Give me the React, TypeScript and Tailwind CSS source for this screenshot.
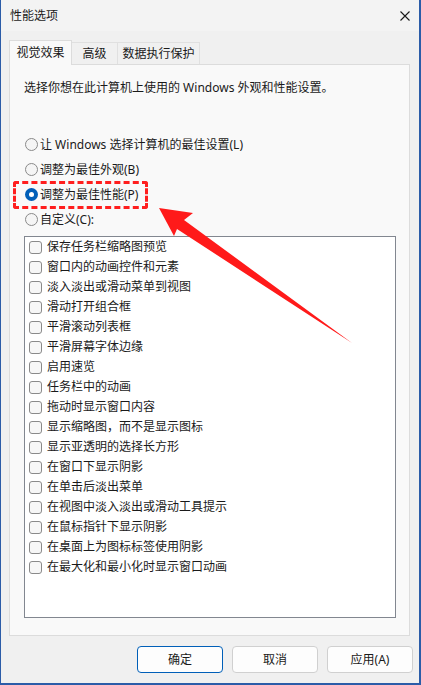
import React from 'react'

const effects = [
  '保存任务栏缩略图预览',
  '窗口内的动画控件和元素',
  '淡入淡出或滑动菜单到视图',
  '滑动打开组合框',
  '平滑滚动列表框',
  '平滑屏幕字体边缘',
  '启用速览',
  '任务栏中的动画',
  '拖动时显示窗口内容',
  '显示缩略图，而不是显示图标',
  '显示亚透明的选择长方形',
  '在窗口下显示阴影',
  '在单击后淡出菜单',
  '在视图中淡入淡出或滑动工具提示',
  '在鼠标指针下显示阴影',
  '在桌面上为图标标签使用阴影',
  '在最大化和最小化时显示窗口动画',
]

const options = [
  { label: '让 Windows 选择计算机的最佳设置(L)', checked: false },
  { label: '调整为最佳外观(B)', checked: false },
  { label: '调整为最佳性能(P)', checked: true },
  { label: '自定义(C):', checked: false },
]

const Radio: React.FC<{ checked: boolean }> = ({ checked }) =>
  checked ? (
    <span className="ml-px flex h-[13px] w-[13px] shrink-0 items-center justify-center rounded-full bg-[#005fb8]">
      <span className="h-[5px] w-[5px] rounded-full bg-white" />
    </span>
  ) : (
    <span className="ml-px h-[13px] w-[13px] shrink-0 rounded-full border border-[#8a8a8a] bg-[#f5f5f5]" />
  )

export default function App() {
  return (
    <div className="relative flex h-[685px] w-[421px] bg-[#2b5ca8] pb-[2px] pl-px pr-[2px] font-['Noto_Sans','Noto_Sans_CJK_SC',sans-serif] text-[12px] text-[#1a1a1a]">
      <div className="flex flex-1 flex-col bg-[#f0f0f0]">
        {/* Title bar */}
        <div className="flex h-[31px] items-center justify-between bg-[#f3f3f3] pl-[9px] pr-[9px]">
          <span className="leading-4">性能选项</span>
          <svg width="10" height="10" viewBox="0 0 10 10" className="text-[#1a1a1a]">
            <path d="M0.5 0.5 L9.5 9.5 M9.5 0.5 L0.5 9.5" stroke="currentColor" strokeWidth="1.1" fill="none" />
          </svg>
        </div>

        <div className="flex flex-col pl-[8px] pr-[9px] pt-[9px]">
          {/* Tabs */}
          <div className="flex items-end">
            <div className="relative z-10 -mb-px flex h-[25px] w-[63px] items-start justify-center border border-b-0 border-[#dcdcdc] bg-[#f9f9f9] pt-[4px] leading-4">
              视觉效果
            </div>
            <div className="flex h-[22px] w-[46px] items-center justify-center border border-b-0 border-l-0 border-[#e0e0e0] bg-[#f0f0f0] leading-4">
              高级
            </div>
            <div className="flex h-[22px] w-[82px] items-center justify-center border border-b-0 border-l-0 border-[#e0e0e0] bg-[#f0f0f0] leading-4">
              数据执行保护
            </div>
          </div>

          {/* Panel */}
          <div className="flex h-[572px] flex-col border border-[#dcdcdc] bg-[#f9f9f9] pl-[14px] pt-[15px]">
            <p className="leading-4">选择你想在此计算机上使用的 Windows 外观和性能设置。</p>

            <div className="mt-[36px] flex flex-col">
              {options.map((o) => (
                <div key={o.label} className="flex h-[25px] items-center gap-[2px] leading-4">
                  <Radio checked={o.checked} />
                  <span>{o.label}</span>
                </div>
              ))}
            </div>

            <div className="mt-[4px] h-[382px] w-[372px] border border-[#828790] bg-white pl-[4px]">
              {effects.map((e) => (
                <div key={e} className="flex h-[20px] items-center gap-[5px] leading-4">
                  <span className="h-[13px] w-[13px] shrink-0 rounded-[3px] border border-[#8a8a8a] bg-[#f7f7f7]" />
                  <span>{e}</span>
                </div>
              ))}
            </div>
          </div>
        </div>

        {/* Buttons */}
        <div className="mt-[10px] flex justify-end gap-[9px] pr-[6px]">
          <button className="h-[27px] w-[86px] rounded-[4px] border border-[#005fb8] bg-[#fdfdfd] leading-4">确定</button>
          <button className="h-[27px] w-[86px] rounded-[4px] border border-[#d0d0d0] bg-[#fdfdfd] leading-4">取消</button>
          <button className="h-[27px] w-[86px] rounded-[4px] border border-[#d0d0d0] bg-[#fdfdfd] leading-4">应用(A)</button>
        </div>
      </div>

      {/* Annotation: dashed highlight */}
      <div className="pointer-events-none absolute left-[13px] top-[181px] h-[28px] w-[135px] rounded-[3px] border-[3px] border-dashed border-[#ff1e1e]" />

      {/* Annotation: arrow */}
      <svg className="pointer-events-none absolute left-0 top-0" width="421" height="685" viewBox="0 0 421 685">
        <polygon points="159,208 193,213 184,220 352,343 177,229 174,236" fill="#ff1a1a" />
      </svg>
    </div>
  )
}
